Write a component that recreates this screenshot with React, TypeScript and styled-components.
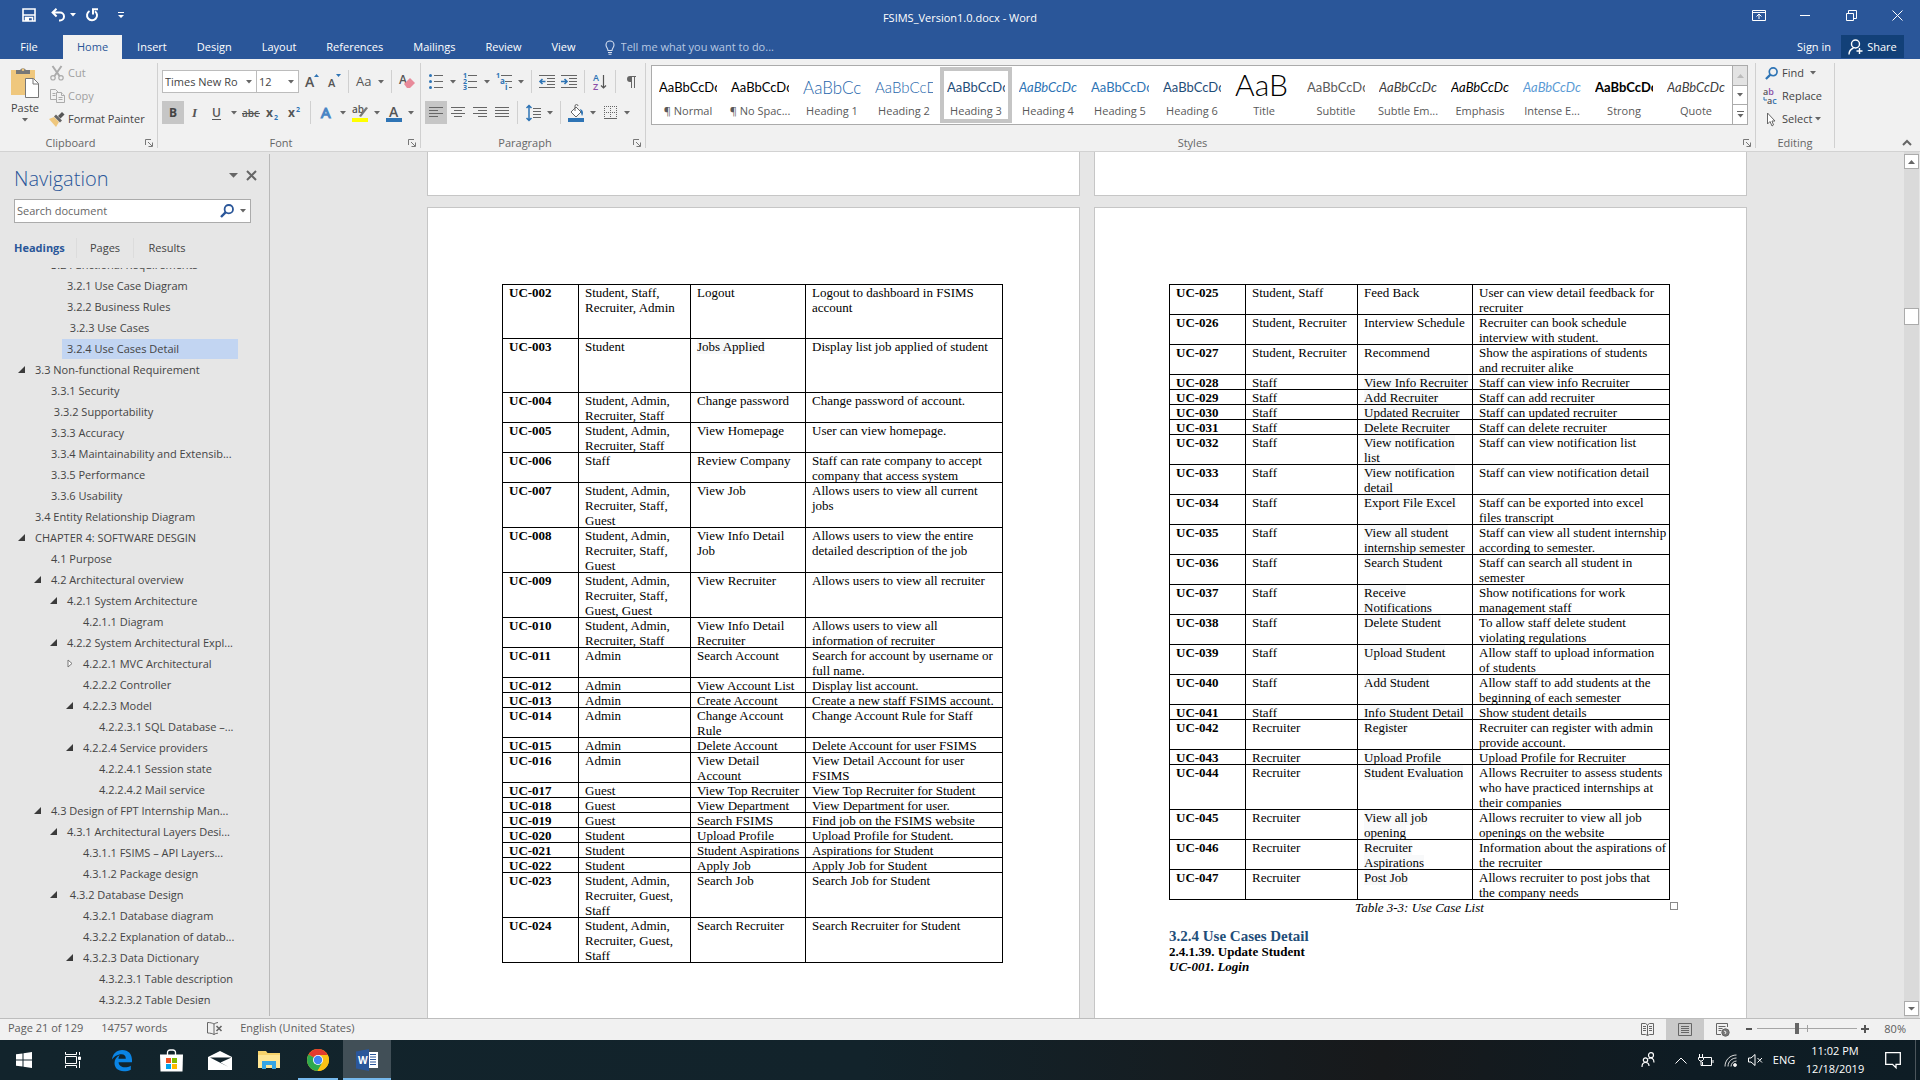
import React from "react";
import styled, { createGlobalStyle, css } from "styled-components";

const ui = '"Open Sans", "Noto Sans", sans-serif';
const serif = '"Liberation Serif", "Times New Roman", serif';
const preview = 'Lato, "Open Sans", sans-serif';
const blue = "#2a5699";
const ink = "#444444";

const GlobalStyle = createGlobalStyle`
  * { box-sizing: border-box; }
  body { margin: 0; overflow: hidden; font-family: ${ui}; font-size: 11px; line-height: 16px; color: ${ink}; }
  button, input, select { font: inherit; color: inherit; margin: 0; padding: 0; border: 0; background: none; border-radius: 0; }
  svg { display: block; flex: none; overflow: visible; }
`;

const Window = styled.div`
  height: 100vh;
  display: flex;
  flex-direction: column;
  background: #e6e6e6;
`;

/* ---------- title bar ---------- */
const TitleBar = styled.header`
  flex: none;
  height: 35px;
  display: grid;
  grid-template-columns: 1fr auto 1fr;
  background: ${blue};
  color: #fff;
`;
const QuickAccess = styled.div`
  display: flex;
  align-items: center;
  height: 30px;
  padding-left: 22px;
`;
const QuickButton = styled.button<{ $gap: number }>`
  margin-right: ${(p) => p.$gap}px;
`;
const DocTitle = styled.h1`
  margin: 0;
  font-size: 11px;
  font-weight: 400;
  line-height: 36px;
`;
const Controls = styled.div`
  display: flex;
  justify-content: flex-end;
  height: 30px;
`;
const ControlButton = styled.button`
  width: 46px;
  display: flex;
  align-items: center;
  justify-content: center;
`;

/* ---------- tabs ---------- */
const TabRow = styled.nav`
  flex: none;
  height: 24px;
  display: flex;
  background: ${blue};
  color: #fff;
`;
const FileTab = styled.button`
  width: 58px;
  margin-right: 5px;
`;
const Tab = styled.button<{ $active?: boolean }>`
  padding: 0 15px;
  ${(p) => p.$active && css`padding: 0 14px; background: #f1f1f1; color: ${blue};`}
`;
const TellMe = styled.label`
  display: flex;
  align-items: center;
  gap: 6px;
  margin-left: 14px;
  flex: 1;
`;
const TellInput = styled.input`
  width: 200px;
  outline: none;
  &::placeholder { color: #b8c9e2; opacity: 1; }
`;
const SignIn = styled.a`
  color: #fff;
  text-decoration: none;
  line-height: 24px;
  margin-right: 10px;
`;
const Share = styled.button`
  display: flex;
  align-items: center;
  justify-content: center;
  gap: 4px;
  width: 63px;
  height: 23px;
  margin-right: 16px;
  background: #124078;
`;

/* ---------- ribbon ---------- */
const Ribbon = styled.section`
  flex: none;
  display: flex;
  height: 93px;
  padding-top: 4px;
  background: #f1f1f1;
  border-bottom: 1px solid #d2d2d2;
`;
const Group = styled.div<{ $width?: number }>`
  ${(p) => (p.$width ? css`flex: none; width: ${p.$width}px;` : css`flex: 1; min-width: 0;`)}
  height: 85px;
  display: flex;
  flex-direction: column;
  border-right: 1px solid #d0d0d0;
`;
const GroupBody = styled.div<{ $pad: number }>`
  flex: none;
  height: 75px;
  padding-left: ${(p) => p.$pad}px;
`;
const GroupFoot = styled.div`
  flex: none;
  display: flex;
  align-items: center;
  height: 10px;
  line-height: 10px;
  color: #666;
`;
const GroupName = styled.span`
  flex: 1;
  text-align: center;
`;
const LaunchButton = styled.button`
  width: 16px;
  padding-left: 4px;
`;
const ClipboardBody = styled(GroupBody)`
  display: flex;
`;
const PasteButton = styled.button`
  display: flex;
  flex-direction: column;
  align-items: center;
  width: 40px;
  gap: 2px;
  margin-right: 4px;
  padding-top: 4px;
`;
const CommandList = styled.div`
  display: flex;
  flex-direction: column;
  gap: 7px;
  padding-top: 2px;
`;
const Command = styled.button<{ $muted?: boolean }>`
  display: flex;
  align-items: center;
  height: 16px;
  gap: 3px;
  color: ${(p) => (p.$muted ? "#a0a0a0" : ink)};
`;
const CommandIcon = styled.span`
  width: 16px;
  display: flex;
  justify-content: center;
`;
const ToolRow = styled.div<{ $first?: boolean }>`
  display: flex;
  align-items: center;
  height: 23px;
  margin-top: ${(p) => (p.$first ? 7 : 8)}px;
`;
const Tool = styled.button<{ $on?: boolean }>`
  display: flex;
  align-items: center;
  justify-content: center;
  width: 22px;
  height: 23px;
  background: ${(p) => (p.$on ? "#c6c6c6" : "transparent")};
`;
const ArrowButton = styled.button`
  display: flex;
  align-items: center;
  justify-content: center;
  width: 12px;
  height: 23px;
`;
const Rule = styled.i`
  width: 1px;
  height: 23px;
  margin: 0 4px;
  background: #d0d0d0;
`;
const SelectWrap = styled.span<{ $width: number }>`
  display: flex;
  align-items: center;
  width: ${(p) => p.$width}px;
  height: 23px;
  margin-right: -1px;
  border: 1px solid #bcbcbc;
  background: #fff;
  &:last-of-type { margin-right: 1px; }
`;
const Picker = styled.select`
  appearance: none;
  flex: 1;
  min-width: 0;
  height: 21px;
  padding-left: 2px;
  outline: none;
`;
const PickerCaret = styled.span`
  width: 14px;
  display: flex;
  justify-content: center;
`;

/* ---------- styles gallery ---------- */
const GalleryRow = styled.div`
  display: flex;
  height: 60px;
  margin: 2px 7px 0 0;
  border: 1px solid #ababab;
  background: #fff;
`;
const Gallery = styled.div`
  display: flex;
  flex: 1;
  min-width: 0;
  overflow: hidden;
`;
const StyleCard = styled.button<{ $on?: boolean }>`
  flex: none;
  width: 72px;
  height: 56px;
  margin-top: 1px;
  display: flex;
  flex-direction: column;
  align-items: center;
  justify-content: space-between;
  padding: ${(p) => (p.$on ? "0" : "4px 0")};
  border: ${(p) => (p.$on ? "4px solid #c5c5c5" : "0")};
  color: #595959;
  white-space: nowrap;
`;
const Sample = styled.span<{ $color: string; $size: number; $weight?: number; $italic?: boolean }>`
  width: 58px;
  height: 32px;
  overflow: hidden;
  text-align: left;
  font-family: ${preview};
  line-height: ${(p) => (p.$size > 20 ? 26 : 33)}px;
  color: ${(p) => p.$color};
  font-size: ${(p) => p.$size}px;
  font-weight: ${(p) => p.$weight ?? 400};
  font-style: ${(p) => (p.$italic ? "italic" : "normal")};
`;
const GalleryNav = styled.div`
  display: grid;
  grid-template-rows: 20px 19px 19px;
  width: 15px;
`;
const GalleryButton = styled.button<{ $off?: boolean }>`
  display: flex;
  align-items: center;
  justify-content: center;
  border-left: 1px solid #ababab;
  border-bottom: 1px solid #ababab;
  background: ${(p) => (p.$off ? "#e3e3e3" : "#fff")};
  &:last-child { border-bottom: 0; }
`;
const RibbonEnd = styled.div`
  width: 85px;
  display: flex;
  align-items: flex-end;
  justify-content: flex-end;
  padding: 0 8px 5px 0;
`;

/* ---------- navigation pane ---------- */
const Main = styled.main`
  flex: 1;
  min-height: 0;
  display: flex;
`;
const Pane = styled.aside`
  flex: none;
  width: 270px;
  display: flex;
  flex-direction: column;
  padding: 12px 18px 12px 14px;
  margin: 2px 0;
  border-right: 1px solid #b9b9b9;
`;
const PaneHead = styled.div`
  display: flex;
  gap: 8px;
  height: 28px;
  align-items: flex-start;
  margin-right: -6px;
`;
const PaneTitle = styled.h2`
  flex: 1;
  margin: 0;
  font-size: 20px;
  font-weight: 300;
  line-height: 26px;
  color: ${blue};
`;
const PaneIcon = styled.button`
  display: flex;
  height: 18px;
  align-items: center;
`;
const SearchBox = styled.label`
  display: flex;
  align-items: center;
  height: 24px;
  margin-top: 5px;
  width: 237px;
  border: 1px solid #ababab;
  background: #fff;
  gap: 6px;
  padding: 0 4px 0 2px;
`;
const SearchInput = styled.input`
  flex: 1;
  min-width: 0;
  outline: none;
  &::placeholder { color: #666; opacity: 1; }
`;
const PaneTabs = styled.div`
  display: flex;
  align-items: center;
  height: 20px;
  margin-top: 15px;
`;
const PaneTab = styled.button<{ $on?: boolean; $width: number }>`
  width: ${(p) => p.$width}px;
  height: 20px;
  text-align: ${(p) => (p.$on ? "left" : "center")};
  font-weight: ${(p) => (p.$on ? 700 : 400)};
  color: ${(p) => (p.$on ? blue : ink)};
  &:not(:last-child) { border-right: 1px solid #dcdcdc; }
`;
const Tree = styled.ul`
  flex: 1;
  min-height: 0;
  margin: 10px 13px 0 0;
  padding: 0;
  overflow: hidden;
  list-style: none;
`;
const Branch = styled.li<{ $level: number }>`
  display: flex;
  height: 21px;
  padding-left: ${(p) => p.$level * 16}px;
  &:first-child { margin-top: -13px; }
`;
const Toggle = styled.button`
  display: flex;
  align-items: center;
  justify-content: center;
  width: 16px;
  height: 18px;
  padding-right: 1px;
`;
const BranchLink = styled.a<{ $on?: boolean }>`
  flex: 1;
  min-width: 0;
  height: 20px;
  padding-left: 5px;
  white-space: pre;
  line-height: 20px;
  text-decoration: none;
  color: ${ink};
  background: ${(p) => (p.$on ? "#c2d5f2" : "transparent")};
`;

/* ---------- document ---------- */
const Canvas = styled.div`
  flex: 1;
  min-width: 0;
  display: flex;
  flex-direction: column;
  align-items: center;
  gap: 11px;
  overflow: hidden;
`;
const Spread = styled.div<{ $grow?: boolean }>`
  display: flex;
  gap: 14px;
  ${(p) => (p.$grow ? css`flex: 1; min-height: 0;` : css`flex: none; height: 44px;`)}
`;
const Sheet = styled.article<{ $tail?: boolean }>`
  width: 653px;
  background: #fff;
  border: 1px solid #c6c6c6;
  ${(p) => (p.$tail ? css`border-top: 0;` : css`border-bottom: 0; padding: 77px 76px 0 74px;`)}
  font-family: ${serif};
  font-size: 13px;
  line-height: 15px;
  color: #000;
`;
const UseCases = styled.table`
  width: 500px;
  table-layout: fixed;
  border-spacing: 0;
`;
const cell = css`
  position: relative;
  padding: 0 0 0 7px;
  vertical-align: top;
  text-align: left;
  white-space: pre-line;
  &::after {
    content: "";
    position: absolute;
    inset: -1px -1px 0 0;
    border: 1px solid #000;
    pointer-events: none;
  }
`;
const IdCell = styled.th`${cell}`;
const Cell = styled.td`${cell}`;
const CaseRow = styled.tr<{ $roomy: boolean }>`
  height: ${(p) => (p.$roomy ? "54px" : "auto")};
`;
const Shade = styled.span<{ $on: boolean }>`
  background: ${(p) => (p.$on ? "#f8f9fa" : "transparent")};
`;
const Figure = styled.div`
  position: relative;
`;
const Handle = styled.i`
  position: absolute;
  left: 501px;
  bottom: -10px;
  width: 8px;
  height: 8px;
  border: 1px solid #8a8a8a;
  background: #fff;
`;
const Caption = styled.p`
  margin: 0;
  text-align: center;
  font-style: italic;
`;
const Heading3 = styled.h3`
  margin: 13px 0 0;
  font-size: 15px;
  line-height: 16px;
  color: #1f4e79;
`;
const Heading4 = styled.h4<{ $italic?: boolean }>`
  margin: 0;
  font-size: 13px;
  font-style: ${(p) => (p.$italic ? "italic" : "normal")};
`;

/* ---------- scroll bar ---------- */
const Scroll = styled.div`
  flex: none;
  width: 16px;
  display: flex;
  flex-direction: column;
  padding: 2px 1px 2px 0;
  background: linear-gradient(to right, #dadada 15px, #e6e6e6 15px);
`;
const ScrollButton = styled.button`
  display: flex;
  align-items: center;
  justify-content: center;
  height: 15px;
  border: 1px solid #ababab;
  background: #fff;
`;
const ScrollSpace = styled.div<{ $share: number }>`
  flex: ${(p) => p.$share} 1 0;
`;
const Thumb = styled.div`
  height: 17px;
  border: 1px solid #ababab;
  background: #fff;
`;

/* ---------- status bar ---------- */
const StatusBar = styled.footer`
  flex: none;
  display: flex;
  align-items: center;
  height: 22px;
  padding: 0 14px 0 8px;
  background: #f1f1f1;
  border-top: 1px solid #bdbdbd;
  color: #5d5d5d;
`;
const StatusLeft = styled.div`
  flex: 1;
  display: flex;
  align-items: center;
  gap: 18px;
  padding-bottom: 3px;
`;
const Proof = styled.button`
  margin-left: 22px;
`;
const ViewButton = styled.button<{ $on?: boolean }>`
  display: flex;
  align-items: center;
  justify-content: center;
  width: 38px;
  height: 21px;
  background: ${(p) => (p.$on ? "#cacaca" : "transparent")};
`;
const ZoomTools = styled.div`
  display: flex;
  align-items: center;
  height: 20px;
  margin-left: 2px;
  padding-bottom: 2px;
`;
const ZoomButton = styled.button`
  display: flex;
  align-items: center;
  justify-content: center;
  width: 10px;
  height: 18px;
`;
const ZoomSlider = styled.input`
  appearance: none;
  width: 100px;
  height: 14px;
  margin: 0 3px;
  background: linear-gradient(#a0a0a0, #a0a0a0) 50px 50% / 1px 7px no-repeat,
    linear-gradient(#a6a6a6, #a6a6a6) 0 50% / 100% 1px no-repeat;
  &::-webkit-slider-thumb {
    appearance: none;
    width: 4px;
    height: 11px;
    background: #666;
  }
`;
const ZoomLevel = styled.button`
  width: 36px;
  text-align: right;
`;

/* ---------- taskbar ---------- */
const TaskBar = styled.div`
  flex: none;
  height: 40px;
  display: flex;
  gap: 1px;
  background: linear-gradient(to right, #12242c, #12232b 45%, #17191b 72%, #0e1c24 88%, #0e1d25);
  color: #fff;
`;
const Task = styled.button<{ $state?: "open" | "active" }>`
  width: 48px;
  display: flex;
  align-items: center;
  justify-content: center;
  ${(p) => p.$state === "open" && css`background: linear-gradient(#76b9ed, #76b9ed) 50% 100% / 40px 2px no-repeat;`}
  ${(p) => p.$state === "active" && css`background: #414f57; box-shadow: inset 0 -2px 0 #76b9ed;`}
`;
const Tray = styled.div`
  margin-left: auto;
  display: flex;
  align-items: center;
`;
const TrayButton = styled.button<{ $width: number }>`
  display: flex;
  align-items: center;
  justify-content: center;
  width: ${(p) => p.$width}px;
  height: 40px;
`;
const Clock = styled.button`
  width: 70px;
  line-height: 18px;
  text-align: center;
`;
const PeekEdge = styled.i`
  width: 5px;
  height: 40px;
  border-left: 1px solid #4c565c;
`;

/* ---------- icons ---------- */
const Caret = ({ color = "#666", size = 5 }: { color?: string; size?: number }) => (
  <svg width={size + 1} height={4} viewBox="0 0 6 4" preserveAspectRatio="none"><path d="M0 0h6L3 3.6z" fill={color} /></svg>
);
const CaretUp = ({ color = "#666" }: { color?: string }) => (
  <svg width="7" height="4" viewBox="0 0 7 4"><path d="M0 4h7L3.5 0z" fill={color} /></svg>
);
const Launcher = () => (
  <svg width="8" height="8" viewBox="0 0 8 8" fill="none" stroke="#777"><path d="M.5 6V.5H6M3 3l4 4M7.500 3.500v4h-4" /></svg>
);
const SaveIcon = () => (
  <svg width="14" height="14" viewBox="0 0 14 14"><path d="M1 1h12v12H1z" fill="none" stroke="#fff" strokeWidth="1.6" /><path d="M1 7h12M3.5 13V9.5h7V13" fill="none" stroke="#fff" strokeWidth="1.5" /><path d="M4 10h3v3H4z" fill="#fff" /></svg>
);
const UndoIcon = () => (
  <svg width="15" height="14" viewBox="0 0 15 14" fill="none" stroke="#fff" strokeWidth="2"><path d="M5.500 .8L1.600 4.500l4 4M2 4.500h7a4 4 0 0 1 0 8H8" /></svg>
);
const RedoIcon = () => (
  <svg width="14" height="14" viewBox="0 0 14 14" fill="none" stroke="#fff" strokeWidth="2"><path d="M4.500 3a5 5 0 1 0 5.500 .3" /><path d="M8 6.500V1.200h5" /></svg>
);
const CustomizeIcon = () => (
  <svg width="6" height="7" viewBox="0 0 6 7"><path d="M0 0h6v1H0zM0 3h6L3 6z" fill="#fff" /></svg>
);
const RibbonDisplayIcon = () => (
  <svg width="14" height="11" viewBox="0 0 14 11" fill="none" stroke="#fff"><path d="M.5.5h13v10H.5zM.5 2.500h13M7 9V4M4.500 6.500L7 4l2.500 2.500" /></svg>
);
const MinIcon = () => <svg width="10" height="10" viewBox="0 0 10 10"><path d="M0 5h10v1H0z" fill="#fff" /></svg>;
const RestoreIcon = () => (
  <svg width="11" height="11" viewBox="0 0 11 11" fill="none" stroke="#fff"><path d="M.5 3.500h7v7h-7zM2.500 3.500v-3h8v8h-3" /></svg>
);
const CloseIcon = () => <svg width="11" height="11" viewBox="0 0 11 11" stroke="#fff"><path d="M.5.5l10 10M10.500.5l-10 10" /></svg>;
const BulbIcon = () => (
  <svg width="10" height="15" viewBox="0 0 10 15" fill="none" stroke="#d5dff0" strokeWidth="1.100"><path d="M3 10.500c0-2-2-3-2-5.500a4 4 0 0 1 8 0c0 2.500-2 3.500-2 5.500zM3 12.500h4M3.500 14.300h3" /></svg>
);
const ShareIcon = () => (
  <svg width="15" height="16" viewBox="0 0 15 16" fill="none" stroke="#fff" strokeWidth="1.400"><circle cx="7.500" cy="5" r="4" /><path d="M1 15.500c0-3 2-5.500 4.500-6.500M11.500 9v6M8.500 12h6" /></svg>
);
const PasteIcon = () => (
  <svg width="28" height="31" viewBox="0 0 28 31">
    <path d="M0 3h24v25H0z" fill="#efc77d" />
    <path d="M5 7V3h4a3.500 3.500 0 0 1 6 0h4v4z" fill="#777" /><circle cx="12" cy="2.800" r="1.300" fill="#efc77d" />
    <path d="M14.500 11.500h8l5 5v14h-13z" fill="#fff" stroke="#777" /><path d="M22 11.500v5.500h5.500" fill="none" stroke="#777" />
  </svg>
);
const CutIcon = () => (
  <svg width="14" height="15" viewBox="0 0 14 15" fill="none" stroke="#ababab" strokeWidth="1.600"><path d="M2.500 0l7 10M11.500 0l-7 10" strokeWidth="2" /><circle cx="3" cy="11.800" r="2.200" strokeWidth="1.200" /><circle cx="11" cy="11.800" r="2.200" strokeWidth="1.200" /></svg>
);
const CopyIcon = () => (
  <svg width="15" height="14" viewBox="0 0 15 14" fill="#f1f1f1" stroke="#ababab"><path d="M.5.5h5l3 3v7h-8z" /><path d="M2.500 4.500h3M2.500 6.500h3" /><path d="M6.500 3.500h5l3 3v7h-8z" /><path d="M11.500 3.500v3h3M8.500 8.500h4M8.500 10.500h4" /></svg>
);
const PainterIcon = () => (
  <svg width="16" height="15" viewBox="0 0 16 15"><path d="M0 7l5-2 5 5-3 5z" fill="#efc77d" /><path d="M5 4.500l2-2 6 6-2 2z" fill="#666" /><path d="M9 4l4-4 2.500 2.500-4 4z" fill="#555" /></svg>
);
const G = ({ children, w = 16, h = 18 }: { children: React.ReactNode; w?: number; h?: number }) => (
  <svg width={w} height={h} viewBox={`0 0 ${w} ${h}`}>{children}</svg>
);
const T = ({ x, y, s = 12, c = "#555", w = 400, i, f = ui, children }: any) => (
  <text x={x} y={y} fontSize={s} fill={c} fontWeight={w} fontStyle={i ? "italic" : undefined} fontFamily={f}>{children}</text>
);
const Lines = ({ rows }: { rows: [number, number][] }) => (
  <svg width="14" height="13" viewBox="0 0 14 13">{rows.map(([x, w], k) => <path key={k} d={`M${x} ${k * 3 + 1}h${w}v1h-${w}z`} fill="#666" />)}</svg>
);
const TreeOpen = () => <svg width="7" height="7" viewBox="0 0 7 7"><path d="M7 0v7H0z" fill="#3b3b3b" /></svg>;
const TreeShut = () => <svg width="6" height="9" viewBox="0 0 6 9"><path d="M1 1l4 3.500L1 8z" fill="#fff" stroke="#777" /></svg>;
const Lens = ({ color = blue, size = 14 }: { color?: string; size?: number }) => (
  <svg width={size} height={size} viewBox="0 0 14 14" fill="none" stroke={color}><circle cx="8.800" cy="5.200" r="4.200" strokeWidth="1.800" /><path d="M5.800 8.200L1 13" strokeWidth="2.400" /></svg>
);

const styleCards: { name: string; text?: string; color: string; size: number; weight?: number; italic?: boolean; on?: boolean }[] = [
  { name: "¶ Normal", color: "#000", size: 13 },
  { name: "¶ No Spac...", color: "#000", size: 13 },
  { name: "Heading 1", color: "#1f66ab", size: 17, weight: 300 },
  { name: "Heading 2", color: "#1f66ab", size: 15, weight: 300 },
  { name: "Heading 3", color: "#1f4d78", size: 13, on: true },
  { name: "Heading 4", color: "#2e74b5", size: 13, italic: true },
  { name: "Heading 5", color: "#2e74b5", size: 13 },
  { name: "Heading 6", color: "#1f4d78", size: 13 },
  { name: "Title", text: "AaB", color: "#000", size: 30, weight: 300 },
  { name: "Subtitle", color: "#5a5a5a", size: 13 },
  { name: "Subtle Em...", color: "#404040", size: 13, italic: true },
  { name: "Emphasis", color: "#000", size: 13, italic: true },
  { name: "Intense E...", color: "#5b9bd5", size: 13, italic: true },
  { name: "Strong", color: "#000", size: 13, weight: 700 },
  { name: "Quote", color: "#404040", size: 13, italic: true },
];

type Node = [level: number, text: string, toggle?: "open" | "shut"];
const tree: Node[] = [
  [1, "3.2 Functional Requirements"],
  [2, "3.2.1 Use Case Diagram"],
  [2, "3.2.2 Business Rules"],
  [2, " 3.2.3 Use Cases"],
  [2, "3.2.4 Use Cases Detail"],
  [0, "3.3 Non-functional Requirement", "open"],
  [1, "3.3.1 Security"],
  [1, " 3.3.2 Supportability"],
  [1, "3.3.3 Accuracy"],
  [1, "3.3.4 Maintainability and Extensib..."],
  [1, "3.3.5 Performance"],
  [1, "3.3.6 Usability"],
  [0, "3.4 Entity Relationship Diagram"],
  [0, "CHAPTER 4: SOFTWARE DESGIN", "open"],
  [1, "4.1 Purpose"],
  [1, "4.2 Architectural overview", "open"],
  [2, "4.2.1 System Architecture", "open"],
  [3, "4.2.1.1 Diagram"],
  [2, "4.2.2 System Architectural Expl...", "open"],
  [3, "4.2.2.1 MVC Architectural", "shut"],
  [3, "4.2.2.2 Controller"],
  [3, "4.2.2.3 Model", "open"],
  [4, "4.2.2.3.1 SQL Database –..."],
  [3, "4.2.2.4 Service providers", "open"],
  [4, "4.2.2.4.1 Session state"],
  [4, "4.2.2.4.2 Mail service"],
  [1, "4.3 Design of FPT Internship Man...", "open"],
  [2, "4.3.1 Architectural Layers Desi...", "open"],
  [3, "4.3.1.1 FSIMS – API Layers..."],
  [3, "4.3.1.2 Package design"],
  [2, " 4.3.2 Database Design", "open"],
  [3, "4.3.2.1 Database diagram"],
  [3, "4.3.2.2 Explanation of datab..."],
  [3, "4.3.2.3 Data Dictionary", "open"],
  [4, "4.3.2.3.1 Table description"],
  [4, "4.3.2.3.2 Table Design"],
];

type Case = [id: string, actor: string, name: string, detail: string];
const leftCases: Case[] = [
  ["002", "Student, Staff,\nRecruiter, Admin", "Logout", "Logout to dashboard in FSIMS\naccount"],
  ["003", "Student", "Jobs Applied", "Display list job applied of student"],
  ["004", "Student, Admin,\nRecruiter, Staff", "Change password", "Change password of account."],
  ["005", "Student, Admin,\nRecruiter, Staff", "View Homepage", "User can view homepage."],
  ["006", "Staff", "Review Company", "Staff can rate company to accept\ncompany that access system"],
  ["007", "Student, Admin,\nRecruiter, Staff,\nGuest", "View Job", "Allows users to view all current\njobs"],
  ["008", "Student, Admin,\nRecruiter, Staff,\nGuest", "View Info Detail\nJob", "Allows users to view the entire\ndetailed description of the job"],
  ["009", "Student, Admin,\nRecruiter, Staff,\nGuest, Guest", "View Recruiter", "Allows users to view all recruiter"],
  ["010", "Student, Admin,\nRecruiter, Staff", "View Info Detail\nRecruiter", "Allows users to view all\ninformation of recruiter"],
  ["011", "Admin", "Search Account", "Search for account by username or\nfull name."],
  ["012", "Admin", "View Account List", "Display list account."],
  ["013", "Admin", "Create Account", "Create a new staff FSIMS account."],
  ["014", "Admin", "Change Account\nRule", "Change Account Rule for Staff"],
  ["015", "Admin", "Delete Account", "Delete Account for user FSIMS"],
  ["016", "Admin", "View Detail\nAccount", "View Detail Account for user\nFSIMS"],
  ["017", "Guest", "View Top Recruiter", "View Top Recruiter for Student"],
  ["018", "Guest", "View Department", "View Department for user."],
  ["019", "Guest", "Search FSIMS", "Find job on the FSIMS website"],
  ["020", "Student", "Upload Profile", "Upload Profile for Student."],
  ["021", "Student", "Student Aspirations", "Aspirations for Student"],
  ["022", "Student", "Apply Job", "Apply Job for Student"],
  ["023", "Student, Admin,\nRecruiter, Guest,\nStaff", "Search Job", "Search Job for Student"],
  ["024", "Student, Admin,\nRecruiter, Guest,\nStaff", "Search Recruiter", "Search Recruiter for Student"],
];
const rightCases: Case[] = [
  ["025", "Student, Staff", "Feed Back", "User can view detail feedback for\nrecruiter"],
  ["026", "Student, Recruiter", "Interview Schedule", "Recruiter can book schedule\ninterview with student."],
  ["027", "Student, Recruiter", "Recommend", "Show the aspirations of students\nand recruiter alike"],
  ["028", "Staff", "View Info Recruiter", "Staff can view info Recruiter"],
  ["029", "Staff", "Add Recruiter", "Staff can add recruiter"],
  ["030", "Staff", "Updated Recruiter", "Staff can updated recruiter"],
  ["031", "Staff", "Delete Recruiter", "Staff can delete recruiter"],
  ["032", "Staff", "View notification\nlist", "Staff can view notification list"],
  ["033", "Staff", "View notification\ndetail", "Staff can view notification detail"],
  ["034", "Staff", "Export File Excel", "Staff can be exported into excel\nfiles transcript"],
  ["035", "Staff", "View all student\ninternship semester", "Staff can view all student internship\naccording to semester."],
  ["036", "Staff", "Search Student", "Staff can search all student in\nsemester"],
  ["037", "Staff", "Receive\nNotifications", "Show notifications for work\nmanagement staff"],
  ["038", "Staff", "Delete Student", "To allow staff delete student\nviolating regulations"],
  ["039", "Staff", "Upload Student", "Allow staff to upload information\nof students"],
  ["040", "Staff", "Add Student", "Allow staff to add students at the\nbeginning of each semester"],
  ["041", "Staff", "Info Student Detail", "Show student details"],
  ["042", "Recruiter", "Register", "Recruiter can register with admin\nprovide account."],
  ["043", "Recruiter", "Upload Profile", "Upload Profile for Recruiter"],
  ["044", "Recruiter", "Student Evaluation", "Allows Recruiter to assess students\nwho have practiced internships at\ntheir companies"],
  ["045", "Recruiter", "View all job\nopening", "Allows recruiter to view all job\nopenings on the website"],
  ["046", "Recruiter", "Recruiter\nAspirations", "Information about the aspirations of\nthe recruiter"],
  ["047", "Recruiter", "Post Job", "Allows recruiter to post jobs that\nthe company needs"],
];

const Column = styled.col<{ $width?: number }>`
  width: ${(p) => (p.$width ? `${p.$width}px` : "auto")};
`;
const CaseTable = ({ cases }: { cases: Case[] }) => (
  <UseCases>
    <colgroup><Column $width={76} /><Column $width={112} /><Column $width={115} /><Column /></colgroup>
    <tbody>
      {cases.map(([id, actor, name, detail]) => (
        <CaseRow key={id} $roomy={Number(id) < 4}>
          <IdCell scope="row">UC-{id}</IdCell>
          <Cell>{actor}</Cell>
          <Cell><Shade $on={id === "003" || Number(id) > 27}>{name}</Shade></Cell>
          <Cell>{detail}</Cell>
        </CaseRow>
      ))}
    </tbody>
  </UseCases>
);

const Foot = ({ name, launcher = true }: { name: string; launcher?: boolean }) => (
  <GroupFoot><GroupName>{name}</GroupName>{launcher && <LaunchButton aria-label={`${name} settings`}><Launcher /></LaunchButton>}</GroupFoot>
);
const Split = ({ label, children }: { label: string; children: React.ReactNode }) => (
  <><Tool aria-label={label}>{children}</Tool><ArrowButton aria-label={`${label} options`}><Caret /></ArrowButton></>
);

const FontGroup = () => (
  <Group $width={263}>
    <GroupBody $pad={4}>
      <ToolRow $first>
        <SelectWrap $width={95}><Picker aria-label="Font"><option>Times New Ro</option></Picker><PickerCaret><Caret /></PickerCaret></SelectWrap>
        <SelectWrap $width={43}><Picker aria-label="Font size"><option>12</option></Picker><PickerCaret><Caret /></PickerCaret></SelectWrap>
        <Tool aria-label="Grow font"><G><T x="2" y="14" s="14" w={600}>A</T><path d="M11 4h5l-2.500-3z" fill="#2e74b5" /></G></Tool>
        <Tool aria-label="Shrink font"><G><T x="3" y="14" s="11" w={600}>A</T><path d="M11 1h5l-2.500 3z" fill="#2e74b5" /></G></Tool>
        <Rule />
        <Tool aria-label="Change case"><G w={18}><T x="1" y="13" s="13">Aa</T></G></Tool><ArrowButton aria-label="Case options"><Caret /></ArrowButton>
        <Rule />
        <Tool aria-label="Clear formatting"><G><T x="0" y="11" s="12" w={600}>A</T><path d="M5 11l6-6 5 5-5 5H8z" fill="#e88a9a" /></G></Tool>
      </ToolRow>
      <ToolRow>
        <Tool $on aria-label="Bold"><G><T x="4" y="13" s="12" w={700} c="#444">B</T></G></Tool>
        <Tool aria-label="Italic"><G><T x="5" y="13" s="13" w={700} i f={serif}>I</T></G></Tool>
        <Tool aria-label="Underline"><G><T x="3" y="13" s="12" w={600}>U</T><path d="M3 15h9v1H3z" fill="#555" /></G></Tool><ArrowButton aria-label="Underline options"><Caret /></ArrowButton>
        <Tool aria-label="Strikethrough"><G w={18}><T x="0" y="13" s="10" w={600}>abc</T><path d="M0 9h18v1H0z" fill="#555" /></G></Tool>
        <Tool aria-label="Subscript"><G><T x="1" y="13" s="12" w={700}>x</T><T x="9" y="16" s="7" w={700} c="#2e74b5">2</T></G></Tool>
        <Tool aria-label="Superscript"><G><T x="1" y="13" s="12" w={700}>x</T><T x="9" y="8" s="7" w={700} c="#2e74b5">2</T></G></Tool>
        <Rule />
        <Split label="Text effects"><G><text x="3" y="14" fontSize="15" fontFamily={ui} fill="#fff" stroke="#4a86c5" strokeWidth="1.200">A</text></G></Split>
        <Split label="Highlight"><G><T x="0" y="9" s="10" w={600}>ab</T><path d="M7 12l7-9 2 1-7 9z" fill="#777" /><path d="M0 14h16v4H0z" fill="#ff0" /></G></Split>
        <Split label="Font color"><G><T x="3" y="13" s="14" w={600}>A</T><path d="M0 14h16v4H0z" fill="#2e74b5" /></G></Split>
      </ToolRow>
    </GroupBody>
    <Foot name="Font" />
  </Group>
);

const dash = (y: number, x = 5) => <path key={y} d={`M${x} ${y}h${14 - x}v1H${x}z`} fill="#666" />;
const ParagraphGroup = () => (
  <Group $width={225}>
    <GroupBody $pad={4}>
      <ToolRow $first>
        <Split label="Bullets"><G w={14} h={15}>{[1, 7, 13].map((y) => <g key={y}><circle cx="1.500" cy={y + 0.5} r="1.500" fill="#2e74b5" />{dash(y)}</g>)}</G></Split>
        <Split label="Numbering"><G w={14} h={17}>{[2, 8, 14].map((y, k) => <g key={y}><T x="0" y={y + 3} s="7" w={700} c="#2e74b5">{k + 1}</T>{dash(y)}</g>)}</G></Split>
        <Split label="Multilevel list"><G w={16} h={17}><T x="0" y="5" s="7" w={700} c="#2e74b5">1</T><path d="M5 2h11v1H5zM9 8h7v1H9zM13 14h3v1h-3z" fill="#666" /><T x="4" y="11" s="8" w={700} c="#2e74b5">a</T><T x="9" y="17" s="8" w={700} c="#2e74b5">i</T></G></Split>
        <Rule />
        <Tool aria-label="Decrease indent"><G h={13}><path d="M0 0h16v1H0zM8 3h8v1H8zM8 6h8v1H8zM8 9h8v1H8zM0 12h16v1H0z" fill="#666" /><path d="M6.500 6.500H1M3.500 4L1 6.500 3.500 9" stroke="#2e74b5" strokeWidth="1.600" fill="none" /></G></Tool>
        <Tool aria-label="Increase indent"><G h={13}><path d="M0 0h16v1H0zM8 3h8v1H8zM8 6h8v1H8zM8 9h8v1H8zM0 12h16v1H0z" fill="#666" /><path d="M0 6.500h5.500M3.500 4L6 6.500 3.500 9" stroke="#2e74b5" strokeWidth="1.600" fill="none" /></G></Tool>
        <Rule />
        <Tool aria-label="Sort"><G w={14}><T x="0" y="8" s="9" w={600} c="#2e74b5">A</T><T x="0" y="17" s="9" w={600} c="#8a4fa8">Z</T><path d="M10.500 2v13M8 12.500l2.500 2.500 2.500-2.500" stroke="#555" fill="none" strokeWidth="1.200" /></G></Tool>
        <Rule />
        <Tool aria-label="Show marks"><G w={12} h={14}><path d="M10 1H5a3 3 0 0 0 0 6h1v6h1V2h2v11h1V2h1V1z" fill="#666" /></G></Tool>
      </ToolRow>
      <ToolRow>
        <Tool $on aria-label="Align left"><Lines rows={[[0, 14], [0, 9], [0, 14], [0, 9]]} /></Tool>
        <Tool aria-label="Center"><Lines rows={[[0, 14], [3, 8], [0, 14], [3, 8]]} /></Tool>
        <Tool aria-label="Align right"><Lines rows={[[0, 14], [5, 9], [0, 14], [5, 9]]} /></Tool>
        <Tool aria-label="Justify"><Lines rows={[[0, 14], [0, 14], [0, 14], [0, 14]]} /></Tool>
        <Rule />
        <Split label="Line spacing"><G w={15}><path d="M3 1v16M.5 4L3 1.500 5.500 4M.5 14L3 16.500 5.500 14" stroke="#2e74b5" strokeWidth="1.500" fill="none" /><path d="M7 4h8v1H7zM7 7h8v1H7zM7 10h8v1H7zM7 13h8v1H7z" fill="#666" /></G></Split>
        <Rule />
        <Split label="Shading"><G><path d="M3 8l5-5 5 5-5 5z" fill="#fff" stroke="#666" /><path d="M7 7V2a1.500 1.500 0 0 1 3 0" stroke="#666" fill="none" /><path d="M12 5c3 1 4 4 2 7-1-2-1-4-2-7z" fill="#2e74b5" /><path d="M0 14h16v4H0z" fill="#2e74b5" /></G></Split>
        <Split label="Borders"><G w={13} h={13}><path d="M.5 0v12M6.500 0v12M12.500 0v12M0 .5h13M0 6.500h13" stroke="#666" strokeDasharray="1 1" fill="none" /><path d="M0 12h13v1H0z" fill="#666" /></G></Split>
      </ToolRow>
    </GroupBody>
    <Foot name="Paragraph" />
  </Group>
);

export default function App() {
  return (
    <Window>
      <GlobalStyle />
      <TitleBar>
        <QuickAccess>
          <QuickButton $gap={15} aria-label="Save"><SaveIcon /></QuickButton>
          <QuickButton $gap={4} aria-label="Undo"><UndoIcon /></QuickButton>
          <QuickButton $gap={9} aria-label="Undo list"><Caret color="#fff" /></QuickButton>
          <QuickButton $gap={19} aria-label="Redo"><RedoIcon /></QuickButton>
          <QuickButton $gap={0} aria-label="Customize"><CustomizeIcon /></QuickButton>
        </QuickAccess>
        <DocTitle>FSIMS_Version1.0.docx - Word</DocTitle>
        <Controls>
          <ControlButton aria-label="Ribbon display"><RibbonDisplayIcon /></ControlButton>
          <ControlButton aria-label="Minimize"><MinIcon /></ControlButton>
          <ControlButton aria-label="Restore"><RestoreIcon /></ControlButton>
          <ControlButton aria-label="Close"><CloseIcon /></ControlButton>
        </Controls>
      </TitleBar>
      <TabRow>
        <FileTab>File</FileTab>
        <Tab $active>Home</Tab>
        {["Insert", "Design", "Layout", "References", "Mailings", "Review", "View"].map((t) => <Tab key={t}>{t}</Tab>)}
        <TellMe><BulbIcon /><TellInput aria-label="Tell me" placeholder="Tell me what you want to do..." /></TellMe>
        <SignIn href="#signin">Sign in</SignIn>
        <Share><ShareIcon />Share</Share>
      </TabRow>
      <Ribbon>
        <Group $width={158}>
          <ClipboardBody $pad={5}>
            <PasteButton><PasteIcon /><span>Paste</span><Caret /></PasteButton>
            <CommandList>
              <Command $muted><CommandIcon><CutIcon /></CommandIcon>Cut</Command>
              <Command $muted><CommandIcon><CopyIcon /></CommandIcon>Copy</Command>
              <Command><CommandIcon><PainterIcon /></CommandIcon>Format Painter</Command>
            </CommandList>
          </ClipboardBody>
          <Foot name="Clipboard" />
        </Group>
        <FontGroup />
        <ParagraphGroup />
        <Group>
          <GroupBody $pad={5}>
            <GalleryRow>
              <Gallery>
                {styleCards.map((s) => (
                  <StyleCard key={s.name} $on={s.on}>
                    <Sample $color={s.color} $size={s.size} $weight={s.weight} $italic={s.italic}>{s.text ?? "AaBbCcDc"}</Sample>
                    <span>{s.name}</span>
                  </StyleCard>
                ))}
              </Gallery>
              <GalleryNav>
                <GalleryButton $off aria-label="Previous styles"><CaretUp color="#bbb" /></GalleryButton>
                <GalleryButton aria-label="Next styles"><Caret /></GalleryButton>
                <GalleryButton aria-label="All styles"><svg width="7" height="7" viewBox="0 0 7 7"><path d="M0 0h7v1H0zM.5 3h6l-3 3.500z" fill="#666" /></svg></GalleryButton>
              </GalleryNav>
            </GalleryRow>
          </GroupBody>
          <Foot name="Styles" />
        </Group>
        <Group $width={79}>
          <GroupBody $pad={7}>
            <CommandList>
              <Command><CommandIcon><Lens color="#2e74b5" size={13} /></CommandIcon>Find<ArrowButton as="span"><Caret /></ArrowButton></Command>
              <Command><CommandIcon><G><T x="0" y="8" s="9" w={600}>a<tspan fill="#8a4fa8">b</tspan></T><T x="4" y="17" s="9" w={600}>a<tspan fill="#2e74b5">c</tspan></T><path d="M1 10v3h3" stroke="#2e74b5" fill="none" /></G></CommandIcon>Replace</Command>
              <Command><CommandIcon><G w={10} h={15}><path d="M1.500 1v11l2.500-2.500 2 4.500 1.500-1-1.500-4H9z" fill="#fff" stroke="#666" /></G></CommandIcon>Select<Caret /></Command>
            </CommandList>
          </GroupBody>
          <Foot name="Editing" launcher={false} />
        </Group>
        <RibbonEnd><button aria-label="Collapse ribbon"><svg width="10" height="7" viewBox="0 0 10 7"><path d="M1 6l4-4 4 4" fill="none" stroke="#666" strokeWidth="2" /></svg></button></RibbonEnd>
      </Ribbon>

      <Main>
        <Pane>
          <PaneHead>
            <PaneTitle>Navigation</PaneTitle>
            <PaneIcon aria-label="Pane options"><svg width="9" height="5" viewBox="0 0 9 5"><path d="M0 0h9L4.500 4.800z" fill="#666" /></svg></PaneIcon>
            <PaneIcon aria-label="Close pane"><svg width="11" height="11" viewBox="0 0 11 11"><path d="M1 1l9 9M10 1l-9 9" stroke="#666" strokeWidth="2" /></svg></PaneIcon>
          </PaneHead>
          <SearchBox>
            <SearchInput aria-label="Search document" placeholder="Search document" />
            <Lens />
            <Caret />
          </SearchBox>
          <PaneTabs>
            <PaneTab $on $width={63}>Headings</PaneTab>
            <PaneTab $width={57}>Pages</PaneTab>
            <PaneTab $width={66}>Results</PaneTab>
          </PaneTabs>
          <Tree>
            {tree.map(([level, text, toggle]) => (
              <Branch key={text} $level={level}>
                <Toggle aria-label={text.trim()} disabled={!toggle}>{toggle === "open" ? <TreeOpen /> : toggle === "shut" ? <TreeShut /> : null}</Toggle>
                <BranchLink href="#heading" $on={text === "3.2.4 Use Cases Detail"}>{text}</BranchLink>
              </Branch>
            ))}
          </Tree>
        </Pane>
        <Canvas>
          <Spread><Sheet $tail /><Sheet $tail /></Spread>
          <Spread $grow>
            <Sheet><CaseTable cases={leftCases} /></Sheet>
            <Sheet>
              <Figure><CaseTable cases={rightCases} /><Handle /></Figure>
              <Caption>Table 3-3: Use Case List</Caption>
              <Heading3>3.2.4 Use Cases Detail</Heading3>
              <Heading4>2.4.1.39. Update Student</Heading4>
              <Heading4 $italic>UC-001. Login</Heading4>
            </Sheet>
          </Spread>
        </Canvas>
        <Scroll>
          <ScrollButton aria-label="Scroll up"><CaretUp /></ScrollButton>
          <ScrollSpace $share={139} />
          <Thumb />
          <ScrollSpace $share={676} />
          <ScrollButton aria-label="Scroll down"><Caret size={6} /></ScrollButton>
        </Scroll>
      </Main>

      <StatusBar>
        <StatusLeft>
          <span>Page 21 of 129</span>
          <span>14757 words</span>
          <Proof aria-label="Proofing"><svg width="15" height="13" viewBox="0 0 15 13" fill="none" stroke="#666"><path d="M7 2v10.500M7 2C5.500 1 3 .5 .5 .5v10.500c2.500 0 5 .5 6.500 1.500 1-.8 2.500-1.300 4-1.400M7 2c1-.8 2.500-1.300 4-1.500" /><path d="M9.500 4l5 5M14.500 4l-5 5" strokeWidth="1.600" /></svg></Proof>
          <span>English (United States)</span>
        </StatusLeft>
        <ViewButton aria-label="Read mode"><svg width="13" height="13" viewBox="0 0 13 13" fill="none" stroke="#666"><path d="M6.500 2v10.500M.5 .5h4l2 1.500 2-1.500h4v11h-4l-2 1-2-1h-4zM2 3.500h3M2 5.500h3M2 7.500h3M8 3.500h3M8 5.500h3M8 7.500h3" /></svg></ViewButton>
        <ViewButton $on aria-label="Print layout"><svg width="14" height="13" viewBox="0 0 14 13" fill="none" stroke="#666"><path d="M.5.5h13v12H.5zM3 3.500h8M3 5.500h8M3 7.500h8M3 9.500h8" /></svg></ViewButton>
        <ViewButton aria-label="Web layout"><svg width="14" height="14" viewBox="0 0 14 14" fill="none" stroke="#666"><path d="M5 11.500H.5V.5h11V4M2.500 3.500h7M2.500 5.500h4M2.500 7.500h3" /><circle cx="9.500" cy="9.500" r="3.700" fill="#777" /><path d="M8 8l2 1-1 2" stroke="#f1f1f1" /></svg></ViewButton>
        <ZoomTools>
          <ZoomButton aria-label="Zoom out"><svg width="6" height="2" viewBox="0 0 6 2"><path d="M0 0h6v2H0z" fill="#555" /></svg></ZoomButton>
          <ZoomSlider type="range" aria-label="Zoom" min={0} max={100} defaultValue={40} />
          <ZoomButton aria-label="Zoom in"><svg width="8" height="8" viewBox="0 0 8 8"><path d="M3 0h2v3h3v2H5v3H3V5H0V3h3z" fill="#555" /></svg></ZoomButton>
          <ZoomLevel>80%</ZoomLevel>
        </ZoomTools>
      </StatusBar>

      <TaskBar>
        <Task aria-label="Start"><svg width="16" height="16" viewBox="0 0 16 16"><path d="M0 2.300L6.500 1.400v6.100H0zM7.500 1.200L16 0v7.500H7.500zM0 8.500h6.500v6.100L0 13.700zM7.500 8.500H16V16l-8.500-1.200z" fill="#fff" /></svg></Task>
        <Task aria-label="Task view"><svg width="16" height="16" viewBox="0 0 16 16" fill="none" stroke="#fff"><path d="M.5 0v2.500h11V0M.5 16v-2.500h11V16M.5 4.500h11v7H.5zM14.500 0v3M14.500 9v7" /><path d="M13.500 5h2v2.500h-2z" fill="#fff" /></svg></Task>
        <Task aria-label="Edge"><svg width="20" height="21" viewBox="0 0 20 21"><path d="M0 9.500C.6 4 4.500 0 10.300 0 16.500 0 20 4.300 20 10v2.300H6.600c.2 3.500 3 5 6.200 5 2.300 0 4.300-.6 6-1.600v4c-2 1-4.300 1.500-7 1.500C6 21.200 2.500 17.800 2.500 13c0-3.800 2.200-6.500 5.400-8C6.700 6.200 6.600 7.600 6.500 8.800h7.300C13.800 6 12.400 4.300 9.500 4.300 5.600 4.300 2 6.800 0 9.500z" fill="#0a84e4" /></svg></Task>
        <Task aria-label="Store"><svg width="23" height="23" viewBox="0 0 23 23"><path d="M7.500 6V3.500a2.500 2.500 0 0 1 2.500-2.500h3a2.500 2.500 0 0 1 2.500 2.500V6" fill="none" stroke="#fff" strokeWidth="1.300" /><path d="M0 5.500h23l-.5 17H.5z" fill="#fff" /><path d="M6 9h5v5H6z" fill="#f25022" /><path d="M12 9h5v5h-5z" fill="#7fba00" /><path d="M6 15h5v5H6z" fill="#00a4ef" /><path d="M12 15h5v5h-5z" fill="#ffb900" /></svg></Task>
        <Task aria-label="Mail"><svg width="24" height="19" viewBox="0 0 24 19"><path d="M0 6L12 0l12 6v13H0z" fill="#fff" /><path d="M2 6.500h21.500L12.500 11.500l8 4.500z" fill="#12232b" /></svg></Task>
        <Task aria-label="File Explorer"><svg width="22" height="18" viewBox="0 0 22 18"><path d="M0 0h8l1.500 2H22v15H0z" fill="#f7d36b" /><path d="M0 4h22v13H0z" fill="#ffe694" /><path d="M4 18V10h14v8h-4v-4H8v4z" fill="#35a5e5" /></svg></Task>
        <Task $state="open" aria-label="Chrome"><svg width="22" height="22" viewBox="0 0 22 22"><circle cx="11" cy="11" r="11" fill="#fbc116" /><path d="M11 11L1.500 5.500A11 11 0 0 1 20.500 5.500z" fill="#e33b2e" /><path d="M11 11L1.500 5.500A11 11 0 0 0 10.500 22l5-8.500z" fill="#2da94f" /><path d="M11 6h9.800A11 11 0 0 1 10.500 22l5-8.500z" fill="#fbc116" /><circle cx="11" cy="11" r="5" fill="#fff" /><circle cx="11" cy="11" r="4.200" fill="#4285f4" /></svg></Task>
        <Task $state="active" aria-label="Word"><svg width="22" height="22" viewBox="0 0 22 22"><path d="M12 3h10v16H12z" fill="#fff" /><path d="M14 5.500h6M14 8h6M14 10.500h6M14 13h6M14 15.500h6" stroke="#2b579a" /><path d="M0 2.500L13 0v22L0 19.500z" fill="#2b579a" /><T x="2" y="15" s="10" w={700} c="#fff">W</T></svg></Task>
        <Tray>
          <TrayButton $width={40} aria-label="People"><svg width="14" height="16" viewBox="0 0 14 16" fill="none" stroke="#fff" strokeWidth="1.200"><circle cx="10" cy="3.200" r="2.500" /><circle cx="4.500" cy="8" r="2.200" /><path d="M1 15c0-3 1.500-4.500 3.500-4.500S8 12 8 14M7.500 6.500c3-1.500 5.500 0 5.500 4" /></svg></TrayButton>
          <TrayButton $width={26} aria-label="Hidden icons"><svg width="12" height="7" viewBox="0 0 12 7" fill="none" stroke="#fff"><path d="M.5 6.500L6 1l5.500 5.500" /></svg></TrayButton>
          <TrayButton $width={24} aria-label="Battery"><svg width="16" height="13" viewBox="0 0 16 13" fill="none" stroke="#fff"><path d="M6 3.500h7.500v8h-9V8M15 6v3" /><path d="M1.500 0v3M4.500 0v3M.5 3.500h5v2l-1.500 1.500h-2L.5 5.500zM3 7v4.500h2" /></svg></TrayButton>
          <TrayButton $width={24} aria-label="Wi-Fi"><svg width="13" height="13" viewBox="0 0 13 13" fill="none" stroke="#ddd"><path d="M1 12.500C1 6 6 1 12.500 1M4 12.500C4 7.500 8 4 12.500 4M7 12.500c0-3 2.500-5.500 5.500-5.500" /><circle cx="11" cy="11" r="1.500" fill="#fff" /></svg></TrayButton>
          <TrayButton $width={26} aria-label="Volume"><svg width="15" height="12" viewBox="0 0 15 12" fill="none" stroke="#fff"><path d="M.5 4v4h2.500l4 3.500V.5L3 4zM9.500 4l4.500 4.500M14 4L9.500 8.500" /></svg></TrayButton>
          <TrayButton $width={32} aria-label="Language">ENG</TrayButton>
          <Clock>11:02 PM<br />12/18/2019</Clock>
          <TrayButton $width={45} aria-label="Notifications"><svg width="16" height="17" viewBox="0 0 16 17" fill="none" stroke="#fff" strokeWidth="1.300"><path d="M.7.7h14.600v11.600H11v3.500L7.500 12.300H.7z" /></svg></TrayButton>
          <PeekEdge />
        </Tray>
      </TaskBar>
    </Window>
  );
}
